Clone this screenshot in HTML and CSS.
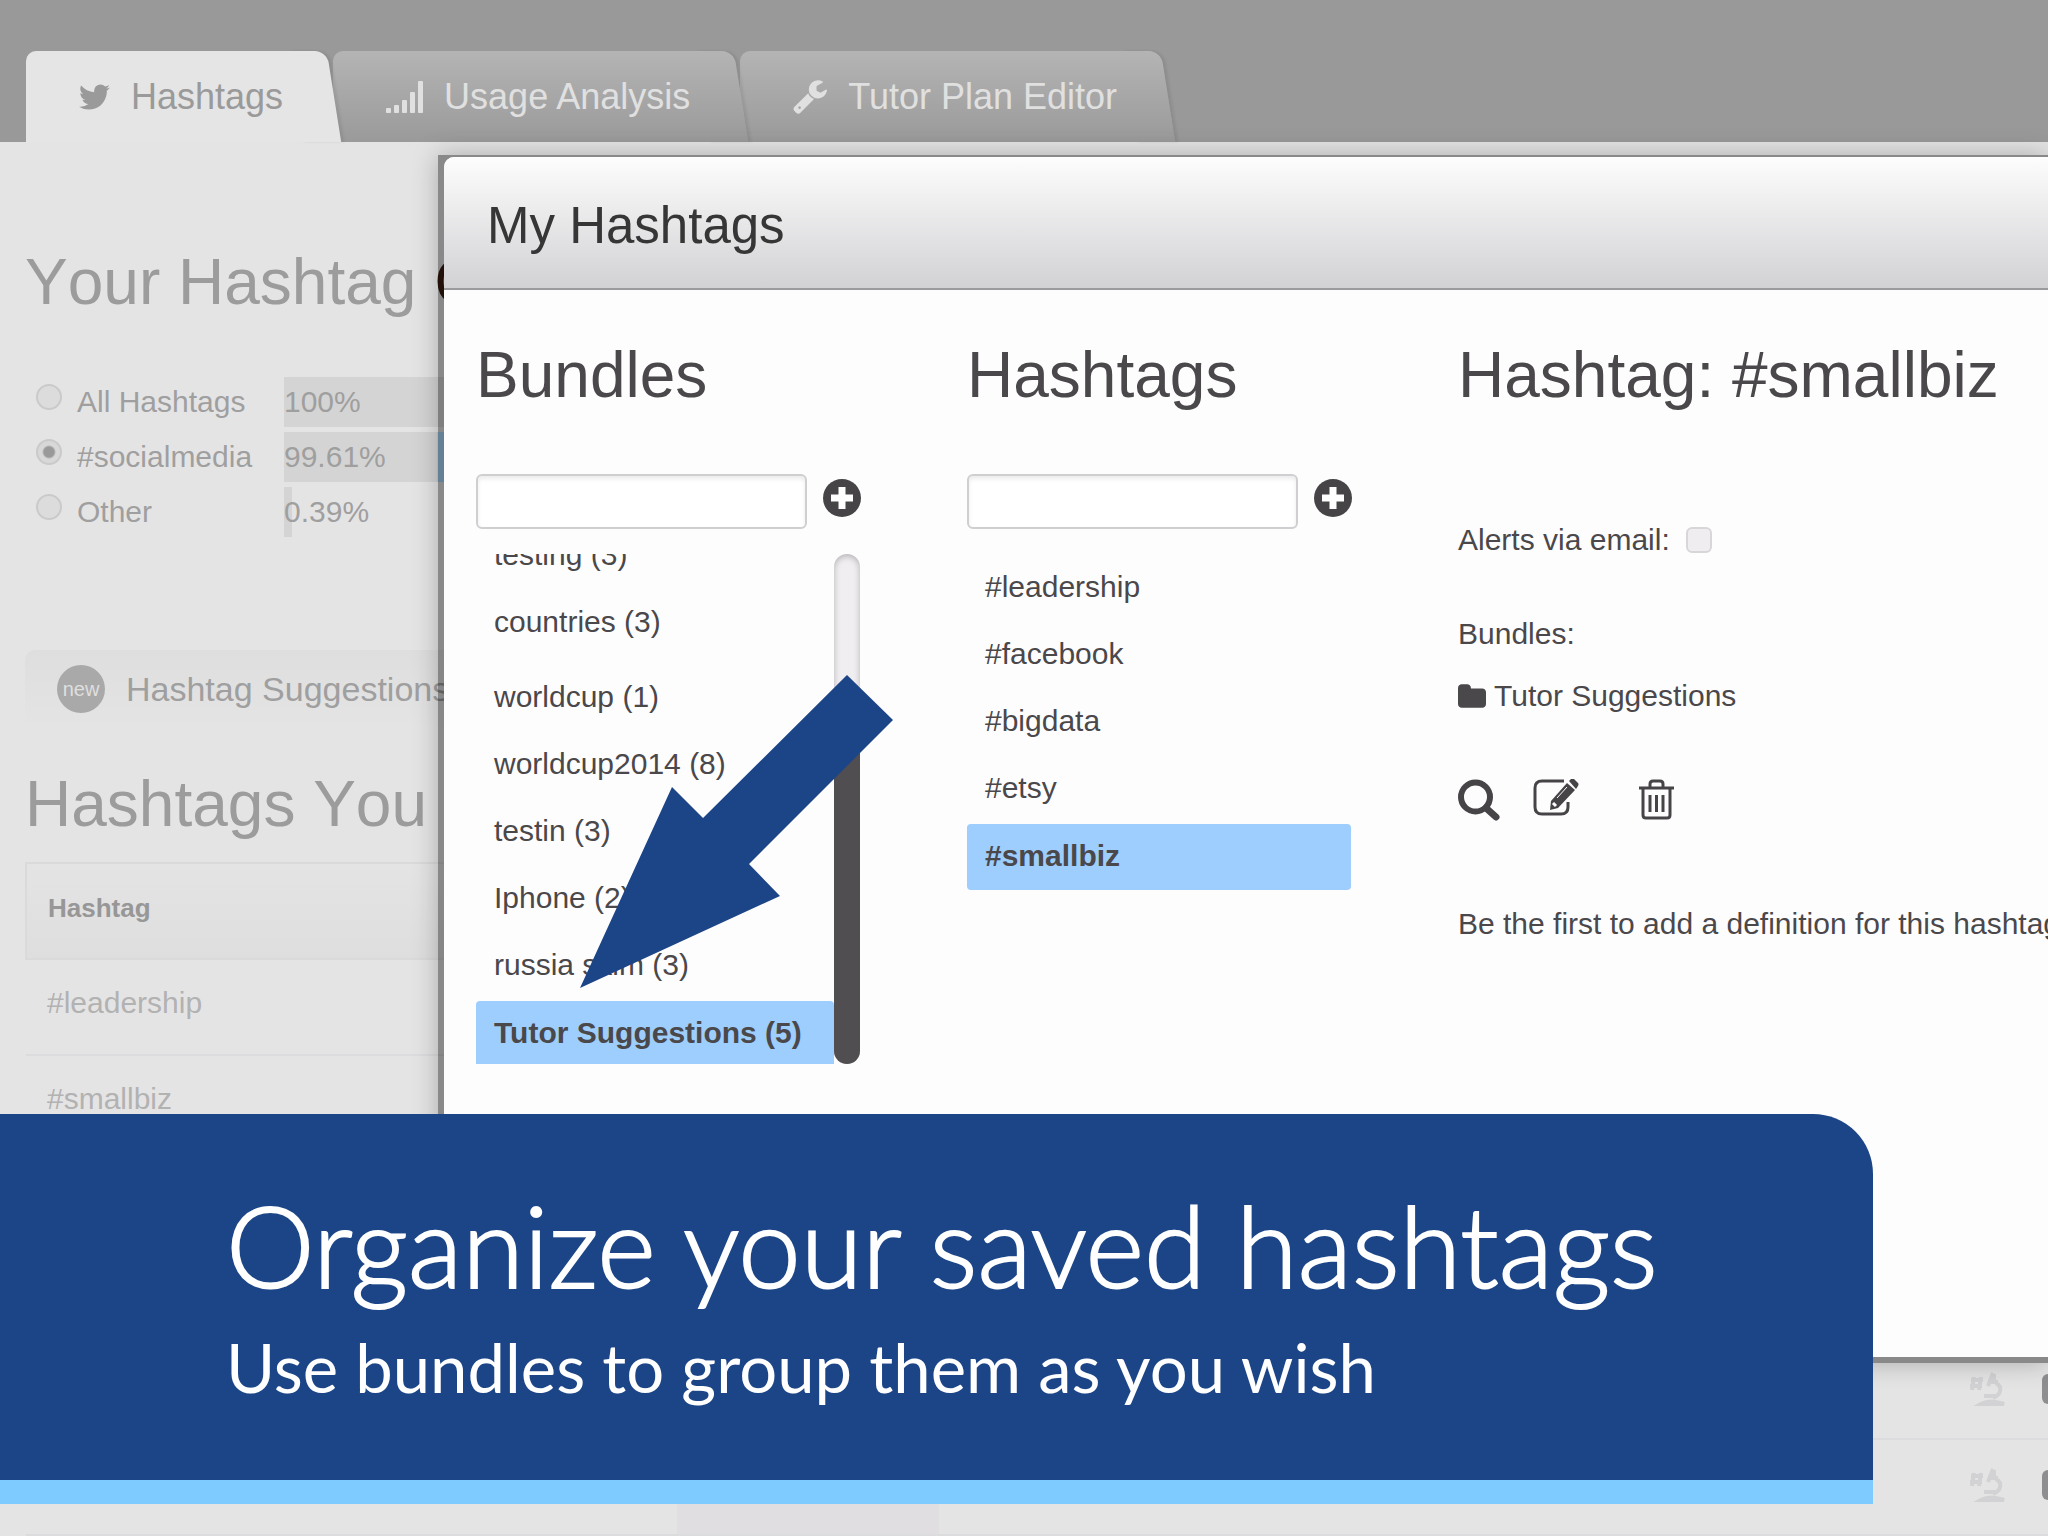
FILE: index.html
```html
<!DOCTYPE html>
<html lang="en">
<head>
  <meta charset="UTF-8">
  <title>My Hashtags</title>
  <meta name="viewport" content="width=device-width, initial-scale=1">
  <link rel="stylesheet" href="styles.css">
</head>
<body>
  <header class="topbar">
    <nav class="tabs">
      <a class="tab active" href="#">
        <svg width="31" height="26" viewBox="44 256 1576 1280" fill="currentColor"><path d="M1620 408q-67 98-162 167 1 14 1 42 0 130-38 259.5t-115.5 248.5-184.5 210.5-258 146-323 54.5q-271 0-496-145 35 4 78 4 225 0 401-138-105-2-188-64.5t-114-159.5q33 5 61 5 43 0 85-11-112-23-185.5-111.5t-73.5-205.5v-4q68 38 146 41-66-44-105-115t-39-154q0-88 44-163 121 149 294.5 238.5t371.5 99.5q-8-38-8-74 0-134 94.5-228.5t228.5-94.5q140 0 236 102 109-21 205-78-37 115-142 178 93-10 186-50z"/></svg>
        Hashtags
      </a>
      <a class="tab" href="#">
        <svg width="37" height="32" viewBox="0 0 37 32" fill="currentColor"><rect x="0" y="27" width="5" height="5" rx="1"/><rect x="8" y="24" width="5" height="8" rx="1"/><rect x="16" y="19" width="5" height="13" rx="1"/><rect x="24" y="11" width="5" height="21" rx="1"/><rect x="32" y="0" width="5" height="32" rx="1"/></svg>
        Usage Analysis
      </a>
      <a class="tab" href="#">
        <svg width="34" height="34" viewBox="60 128 1668 1644" fill="currentColor"><path d="M448 1472q0-26-19-45t-45-19-45 19-19 45 19 45 45 19 45-19 19-45zm644-420l-682 682q-37 37-90 37-52 0-91-37l-106-108q-38-36-38-90 0-53 38-91l681-681q39 98 114.500 173.500t173.500 114.500zm634-435q0 39-23 106-47 134-164.500 217.500t-258.500 83.500q-185 0-316.500-131.500t-131.500-316.500 131.500-316.500 316.500-131.500q58 0 121.500 16.500t107.500 46.500q16 11 16 28t-16 28l-293 169v224l193 107q5-3 79-48.500t135.500-81 70.500-35.500q15 0 23.500 10t8.500 25z"/></svg>
        Tutor Plan Editor
      </a>
    </nav>
  </header>

  <main class="page">
    <h2 class="page-title">Your Hashtag <span class="dark">C</span></h2>

    <div class="filters">
      <div class="filter">
        <input type="radio" name="tag" id="tagAll">
        <label for="tagAll">All Hashtags</label>
        <div class="meter"><div class="fill" style="width:100%">100%</div></div>
      </div>
      <div class="filter">
        <input type="radio" name="tag" id="tagSocial" checked>
        <label for="tagSocial">#socialmedia</label>
        <div class="meter"><div class="fill current" style="width:99.61%">99.61%</div></div>
      </div>
      <div class="filter">
        <input type="radio" name="tag" id="tagOther">
        <label for="tagOther">Other</label>
        <div class="meter"><div class="fill" style="width:5%">0.39%</div></div>
      </div>
    </div>

    <div class="suggestions">
      <span class="new">new</span>
      Hashtag Suggestions
    </div>

    <h2 class="page-title">Hashtags You</h2>
    <table class="tags">
      <thead>
        <tr><th>Hashtag</th><th class="score"></th><th></th><th class="tools"></th></tr>
      </thead>
      <tbody>
        <tr><td>#leadership</td><td></td><td></td><td></td></tr>
        <tr><td>#smallbiz</td><td></td><td></td><td></td></tr>
        <tr><td></td><td></td><td></td><td></td></tr>
        <tr><td></td><td></td><td></td><td></td></tr>
        <tr>
          <td></td><td></td><td></td>
          <td>
            <div class="row-tools">
              <svg width="36" height="34" viewBox="0 0 36 34" fill="none" stroke="currentColor" stroke-width="4"><path d="M4 5L2 18M11 5L9 18M1 8h12M0 14h12M18 14l5-13M20 10h8M24 2v8M26 11c7 4 5 12-3 15M14 24h12"/><path d="M11 32q9-5 23 0z" fill="currentColor"/></svg>
              <span class="chip"></span>
            </div>
          </td>
        </tr>
        <tr>
          <td></td><td class="shade"></td><td></td>
          <td>
            <div class="row-tools">
              <svg width="36" height="34" viewBox="0 0 36 34" fill="none" stroke="currentColor" stroke-width="4"><path d="M4 5L2 18M11 5L9 18M1 8h12M0 14h12M18 14l5-13M20 10h8M24 2v8M26 11c7 4 5 12-3 15M14 24h12"/><path d="M11 32q9-5 23 0z" fill="currentColor"/></svg>
              <span class="chip"></span>
            </div>
          </td>
        </tr>
      </tbody>
    </table>
  </main>

  <div class="modal-frame">
    <div class="modal">
      <div class="modal-header"><h1>My Hashtags</h1></div>
      <div class="modal-body">
        <section class="column">
          <h2>Bundles</h2>
          <div class="add-row">
            <input type="text" aria-label="New bundle">
            <button type="button" aria-label="Add bundle">
              <svg width="40" height="40" viewBox="0 0 40 40"><circle cx="20" cy="20" r="19" fill="#464447"/><path d="M20 9v22M9 20h22" stroke="#fff" stroke-width="7"/></svg>
            </button>
          </div>
          <div class="scroller">
            <ul class="list scrolled">
              <li>testing (3)</li>
              <li>countries (3)</li>
              <li class="group">worldcup (1)</li>
              <li>worldcup2014 (8)</li>
              <li>testin (3)</li>
              <li>Iphone (2)</li>
              <li>russia skim (3)</li>
              <li class="selected">Tutor Suggestions (5)</li>
            </ul>
            <div class="track"><div class="thumb"></div></div>
          </div>
        </section>

        <section class="column">
          <h2>Hashtags</h2>
          <div class="add-row">
            <input type="text" aria-label="New hashtag">
            <button type="button" aria-label="Add hashtag">
              <svg width="40" height="40" viewBox="0 0 40 40"><circle cx="20" cy="20" r="19" fill="#464447"/><path d="M20 9v22M9 20h22" stroke="#fff" stroke-width="7"/></svg>
            </button>
          </div>
          <ul class="list">
            <li>#leadership</li>
            <li>#facebook</li>
            <li>#bigdata</li>
            <li>#etsy</li>
            <li class="selected">#smallbiz</li>
          </ul>
        </section>

        <section class="column details">
          <h2>Hashtag: #smallbiz</h2>
          <div class="alerts">
            <label for="alerts">Alerts via email:</label>
            <input type="checkbox" id="alerts">
          </div>
          <p>Bundles:</p>
          <div class="folder">
            <svg width="28" height="24" viewBox="64 128 1664 1408" fill="currentColor"><path d="M1728 608v704q0 92-66 158t-158 66h-1216q-92 0-158-66t-66-158v-960q0-92 66-158t158-66h320q92 0 158 66t66 158v32h672q92 0 158 66t66 158z"/></svg>
            Tutor Suggestions
          </div>
          <div class="actions">
            <button type="button" aria-label="Search">
              <svg width="42" height="42" viewBox="0 0 42 42" fill="none" stroke="currentColor"><circle cx="17.500" cy="18" r="14.500" stroke-width="6"/><path d="M28 29l10 9" stroke-width="7" stroke-linecap="round"/></svg>
            </button>
            <button type="button" aria-label="Edit">
              <svg width="46" height="38" viewBox="0 0 46 38" fill="none" stroke="currentColor" stroke-width="3"><path d="M31 2H9Q2 2 2 9v19q0 7 7 7h19q7 0 7-7v-5"/><path d="M34 4l8 7-17 18-8 2 1-9z" fill="currentColor" stroke="none"/><path d="M36 2l2-2q1-1 3 0l4 4q1 1 0 3l-2 3z" fill="currentColor" stroke="none"/><path d="M34 8L24 19" stroke="#fff" stroke-width="1"/><path d="M20 24l3 3" stroke="#fff" stroke-width="3"/></svg>
            </button>
            <button type="button" aria-label="Delete">
              <svg width="36" height="42" viewBox="0 0 36 42" fill="none" stroke="currentColor" stroke-width="3"><path d="M0 9h35M11 8V5q0-3 3-3h7q3 0 3 3v3M4 9v27q0 3 3 3h21q3 0 3-3V9M11 16v17M17.500 16v17M24 16v17"/></svg>
            </button>
          </div>
          <p>Be the first to add a definition for this hashtag.</p>
        </section>
      </div>
    </div>
    <svg class="arrow" width="313" height="313" viewBox="0 0 313 313"><path d="M267 0L313 45 169 189 200 221 0 313 92 112 123 143z" fill="#1c4587"/></svg>
  </div>

  <div class="banner">
    <p class="banner-title">Organize your saved hashtags</p>
    <p class="banner-text">Use bundles to group them as you wish</p>
  </div>
</body>
</html>
```
FILE: styles.css
```css
* {
  box-sizing: border-box;
}
body {
  position: relative;
  margin: 0;
  height: 100vh;
  overflow: hidden;
  background: #e5e4e5;
  font-family: "Liberation Sans", Arial, sans-serif;
  font-size: 30px;
  line-height: 40px;
  color: #4a484a;
}
h1, h2, p, ul {
  margin: 0;
  padding: 0;
  font-weight: normal;
}
h2 {
  font-size: 64px;
  line-height: 64px;
  white-space: nowrap;
}
svg {
  display: block;
  flex: none;
}

/* tabs */
.topbar {
  height: 142px;
  padding: 51px 26px 0;
  background: #999;
}
.tabs {
  display: flex;
  gap: 6px;
}
.tab {
  position: relative;
  display: flex;
  align-items: center;
  gap: 21px;
  height: 91px;
  padding: 0 44px 0 53px;
  border-radius: 10px 0 0 0;
  background: linear-gradient(#b4b4b4, #9a9a9a) 0 0 / calc(100% - 20px) 100% no-repeat;
  color: #e0e0e0;
  font-size: 36px;
  text-decoration: none;
  white-space: nowrap;
  z-index: 1;
}
/* the slanted piece forms the right corner of the tab */
.tab::after {
  content: "";
  position: absolute;
  z-index: -1;
  top: 0;
  bottom: 0;
  right: -7px;
  width: 40px;
  border-radius: 0 12px 0 0;
  background: linear-gradient(#b4b4b4, #9a9a9a);
  box-shadow: 3px 0 3px rgba(0, 0, 0, 0.08);
  transform: skewX(9deg);
}
.tab:nth-child(2) {
  z-index: 2;
}
.tab.active {
  z-index: 3;
  background-image: linear-gradient(#e5e5e5, #e5e5e5);
  color: #9a9a9a;
}
.tab.active::after {
  background: #e5e5e5;
}

/* page behind the dialog */
.page {
  padding: 108px 0 0 25px;
  overflow: hidden;
  color: #9f9f9f;
}
.page-title {
  color: #9c9c9c;
  font-kerning: none;
}
.dark {
  color: #3a1c10;
}
.filters {
  display: flex;
  flex-direction: column;
  gap: 5px;
  margin-top: 63px;
}
.filter {
  display: flex;
  align-items: center;
  height: 50px;
}
.filter label {
  flex: none;
  width: 222px;
  padding-left: 15px;
}
.filter input {
  appearance: none;
  flex: none;
  width: 26px;
  height: 26px;
  margin: 0 0 10px 11px;
  border: 2px solid #cacaca;
  border-radius: 50%;
  background: #dcdcdc;
}
.filter input:checked {
  background: radial-gradient(#999 0 5px, #d8d8d8 7px);
}
.meter {
  flex: none;
  width: 162px;
}
.fill {
  height: 50px;
  line-height: 50px;
  background: #d4d4d4;
  white-space: nowrap;
}
.fill.current {
  border-right: 8px solid #a7d5f7;
}
.suggestions {
  display: flex;
  align-items: center;
  gap: 21px;
  width: 600px;
  height: 78px;
  margin: 113px 0 44px;
  padding-left: 32px;
  border-radius: 10px;
  background: linear-gradient(#dedede, #e5e4e5);
  font-size: 34px;
}
.new {
  width: 48px;
  height: 48px;
  border-radius: 50%;
  background: #a9a9a9;
  color: #dfdfdf;
  font-size: 20px;
  line-height: 48px;
  text-align: center;
}

.tags {
  width: calc(100% + 40px);
  margin-top: 26px;
  border-collapse: collapse;
  table-layout: fixed;
}
.tags th {
  height: 96px;
  padding: 0 0 6px 21px;
  border-top: 2px solid #dadada;
  border-bottom: 2px solid #dadada;
  background: linear-gradient(#e4e4e4, #dedede);
  color: #979797;
  font-size: 26px;
  text-align: left;
}
.tags th:first-child {
  width: 651px;
  border-left: 2px solid #dadada;
}
.tags .score {
  width: 262px;
}
.tags .tools {
  width: 118px;
}
.tags td {
  height: 96px;
  padding: 0 0 8px 21px;
  border-bottom: 2px solid #dcdbdd;
  color: #b2b2b2;
}
.tags td.shade {
  background: #e0dee1;
}
.tags td:last-child {
  padding: 0 0 4px;
}
.row-tools {
  display: flex;
  align-items: center;
  gap: 36px;
  color: #d2d1d3;
}
.chip {
  width: 30px;
  height: 30px;
  border-radius: 6px;
  background: #8e8d8f;
}

/* dialog */
.modal-frame {
  position: absolute;
  z-index: 10;
  top: 155px;
  right: 0;
  bottom: 173px;
  left: 438px;
  padding: 2px 0 6px 6px;
  background: rgba(0, 0, 0, 0.4);
  box-shadow: 0 0 24px rgba(0, 0, 0, 0.25);
}
.modal {
  height: 100%;
  overflow: hidden;
  border-radius: 10px 0 0 0;
  background: #fefdfe;
}
.modal-header {
  height: 133px;
  padding: 37px 43px;
  border-bottom: 2px solid #9b9b9d;
  background: linear-gradient(#fdfdfd, #d2d2d5);
}
.modal-header h1 {
  color: #363636;
  font-size: 51px;
  line-height: 64px;
}
.modal-body {
  display: flex;
  gap: 107px;
  padding: 53px 0 0 32px;
}
.column {
  flex: none;
  width: 384px;
}
.add-row {
  display: flex;
  align-items: center;
  gap: 15px;
  margin-top: 67px;
}
.add-row input {
  flex: none;
  width: 331px;
  height: 55px;
  padding: 0 12px;
  border: 2px solid #d0ced1;
  border-radius: 6px;
  background: #fff;
  box-shadow: inset 0 3px 4px rgba(0, 0, 0, 0.08);
  font: inherit;
}
button {
  padding: 0;
  border: none;
  background: none;
  color: #464447;
  cursor: pointer;
}
.add-row button {
  margin-bottom: 8px;
}
.scroller {
  display: flex;
  height: 510px;
  margin-top: 25px;
  overflow: hidden;
}
.list {
  display: flex;
  flex: 1;
  flex-direction: column;
  gap: 1px;
  margin-top: 27px;
  list-style: none;
}
.list.scrolled {
  margin-top: -30px;
}
.list li {
  flex: none;
  height: 66px;
  padding-left: 18px;
  line-height: 62px;
}
.list .group {
  margin-top: 8px;
}
.list .selected {
  border-radius: 4px;
  background: #9dcefe;
  font-weight: bold;
  line-height: 64px;
}
.track {
  width: 26px;
  padding-top: 156px;
  border-radius: 13px;
  background: #f0eef1;
  box-shadow: inset 0 2px 6px rgba(0, 0, 0, 0.25);
}
.thumb {
  height: 100%;
  border-radius: 13px;
  background: #504e50;
}

.details {
  flex: 1;
  white-space: nowrap;
}
.alerts {
  display: flex;
  align-items: center;
  gap: 16px;
  margin: 113px 0 54px;
}
.alerts input {
  appearance: none;
  width: 26px;
  height: 26px;
  margin: 0;
  border: 2px solid #d8d6d9;
  border-radius: 6px;
  background: #efedf0;
}
.folder {
  display: flex;
  align-items: center;
  gap: 8px;
  margin-top: 22px;
}
.actions {
  display: flex;
  align-items: flex-start;
  gap: 33px;
  margin: 63px 0 83px;
}
.actions button:last-child {
  margin-left: 27px;
}
.arrow {
  position: absolute;
  top: 520px;
  left: 142px;
}

/* caption */
.banner {
  position: absolute;
  z-index: 20;
  right: 175px;
  bottom: 32px;
  left: 0;
  height: 390px;
  padding: 71px 0 0 226px;
  border-bottom: 24px solid #7dcbff;
  border-radius: 0 60px 0 0;
  background: #1c4587;
  color: #fff;
  font-family: Lato, sans-serif;
  white-space: nowrap;
}
.banner-title {
  font-size: 112px;
  font-weight: 300;
  line-height: 120px;
  -webkit-text-stroke: 2px #fff;
}
.banner-text {
  margin-top: 22px;
  font-size: 67px;
  line-height: 80px;
}
```
